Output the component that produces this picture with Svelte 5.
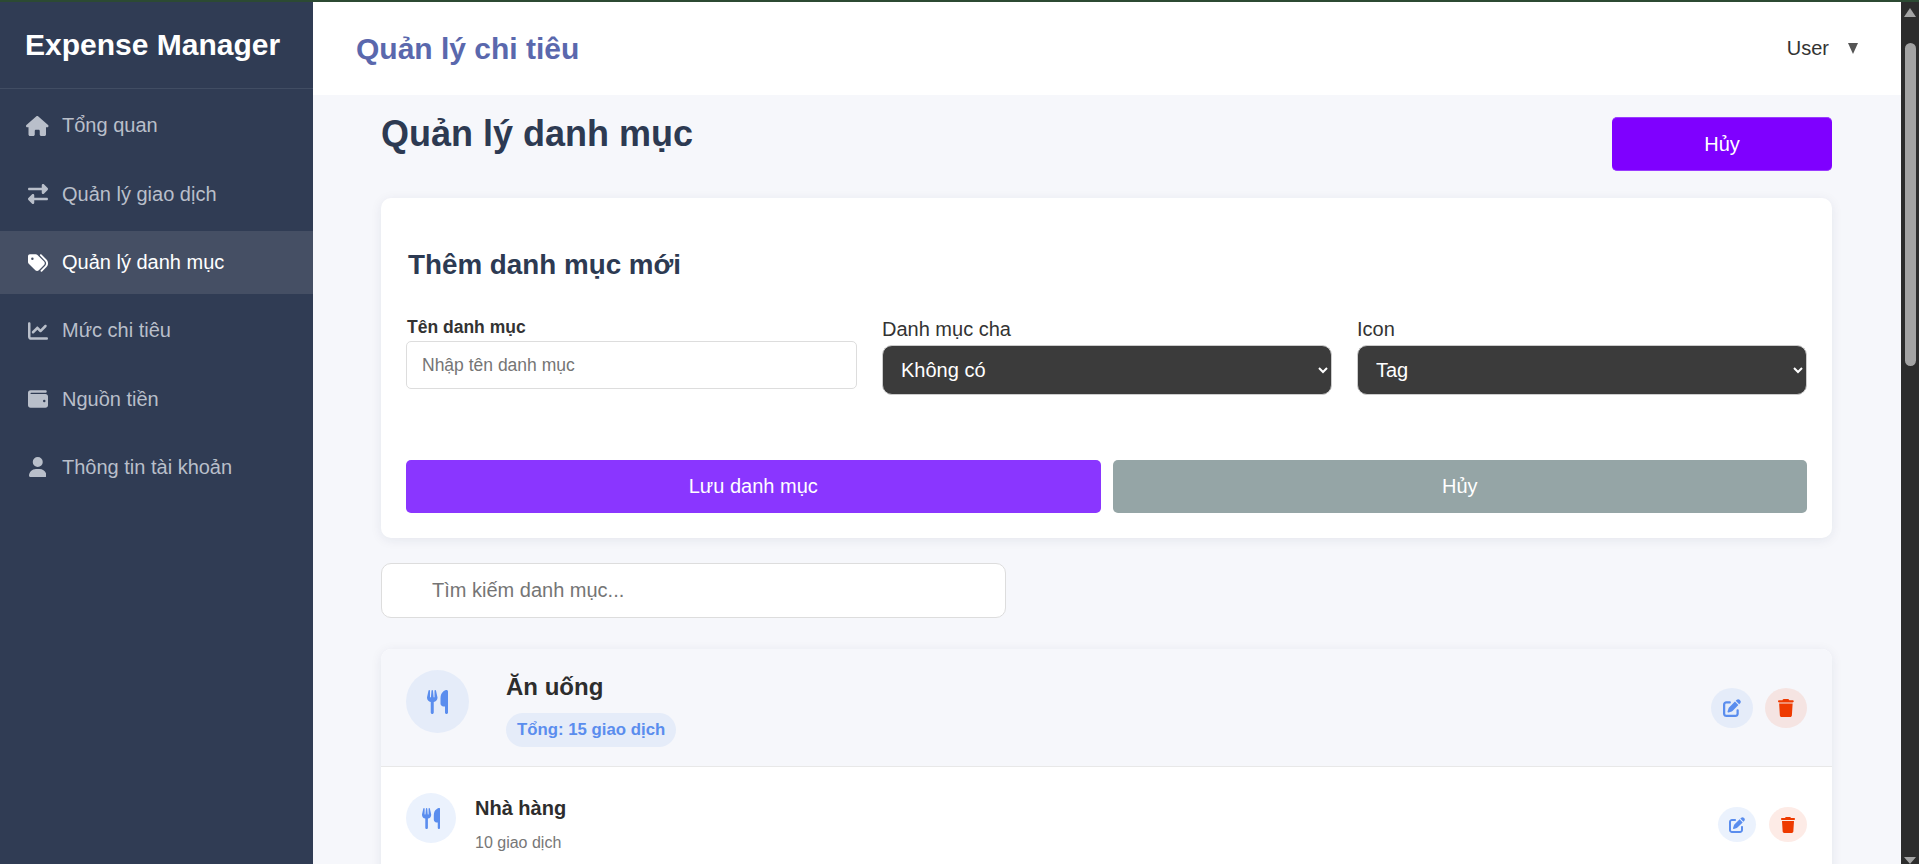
<script>
  const icons = {
    home: { w: 576, d: 'M575.8 255.5c0 18-15 32.1-32 32.1h-32l.7 160.2c0 2.7-.2 5.4-.5 8.1V472c0 22.1-17.9 40-40 40H456c-1.1 0-2.2 0-3.3-.1c-1.4 .1-2.8 .1-4.2 .1H416 392c-22.1 0-40-17.9-40-40V448 384c0-17.7-14.3-32-32-32H256c-17.7 0-32 14.3-32 32v64 24c0 22.1-17.9 40-40 40H160 128.1c-1.5 0-3-.1-4.5-.2c-1.2 .1-2.4 .2-3.6 .2H104c-22.1 0-40-17.9-40-40V360c0-.9 0-1.9 .1-2.8V287.6H32c-18 0-32-14-32-32.1c0-9 3-17 10-24L266.4 8c7-7 15-8 22-8s15 2 21 7L564.8 231.5c8 7 12 15 11 24z' },
    exchange: { w: 512, d: 'M32 96l320 0V32c0-12.9 7.8-24.6 19.8-29.6s25.7-2.2 34.9 6.9l96 96c6 6 9.4 14.1 9.4 22.6s-3.4 16.6-9.4 22.6l-96 96c-9.2 9.2-22.9 11.9-34.9 6.9s-19.8-16.6-19.8-29.6V160L32 160c-17.7 0-32-14.3-32-32s14.3-32 32-32zM480 352c17.7 0 32 14.3 32 32s-14.3 32-32 32H160v64c0 12.9-7.8 24.6-19.8 29.6s-25.7 2.2-34.9-6.9l-96-96c-6-6-9.4-14.1-9.4-22.6s3.4-16.6 9.4-22.6l96-96c9.2-9.2 22.9-11.9 34.9-6.9s19.8 16.6 19.8 29.6l0 64H480z' },
    tags: { w: 512, d: 'M345 39.1L472.8 168.4c52.4 53 52.4 138.2 0 191.2L360.8 472.9c-9.3 9.4-24.5 9.5-33.9 .2s-9.5-24.5-.2-33.9L438.6 325.9c33.9-34.3 33.9-89.4 0-123.7L310.9 72.9c-9.3-9.4-9.2-24.6 .2-33.9s24.6-9.2 33.9 .2zM0 229.5V80C0 53.5 21.5 32 48 32H197.5c17 0 33.3 6.7 45.3 18.7l168 168c25 25 25 65.5 0 90.5L277.3 442.7c-25 25-65.5 25-90.5 0l-168-168C6.7 262.7 0 246.5 0 229.5zM144 144a32 32 0 1 0 -64 0 32 32 0 1 0 64 0z' },
    chart: { w: 512, d: 'M64 64c0-17.7-14.3-32-32-32S0 46.3 0 64V400c0 44.2 35.8 80 80 80H480c17.7 0 32-14.3 32-32s-14.3-32-32-32H80c-8.8 0-16-7.2-16-16V64zm406.6 86.6c12.5-12.5 12.5-32.8 0-45.3s-32.8-12.5-45.3 0L320 210.7l-57.4-57.4c-12.5-12.5-32.8-12.5-45.3 0l-112 112c-12.5 12.5-12.5 32.8 0 45.3s32.8 12.5 45.3 0L240 221.3l57.4 57.4c12.5 12.5 32.8 12.5 45.3 0l128-128z' },
    wallet: { w: 512, d: 'M64 32C28.7 32 0 60.7 0 96V416c0 35.3 28.7 64 64 64H448c35.3 0 64-28.7 64-64V192c0-35.3-28.7-64-64-64H80c-8.8 0-16-7.2-16-16s7.2-16 16-16H448c17.7 0 32-14.3 32-32s-14.3-32-32-32H64zM416 272a32 32 0 1 1 0 64 32 32 0 1 1 0-64z' },
    user: { w: 448, d: 'M224 256A128 128 0 1 0 224 0a128 128 0 1 0 0 256zm-45.7 48C79.8 304 0 383.8 0 482.3C0 498.7 13.3 512 29.7 512H418.3c16.4 0 29.7-13.3 29.7-29.7C448 383.8 368.2 304 269.7 304H178.3z' },
    utensils: { w: 448, d: 'M416 0C400 0 288 32 288 176V288c0 35.3 28.7 64 64 64h32V480c0 17.7 14.3 32 32 32s32-14.3 32-32V352 240 32c0-17.7-14.3-32-32-32zM64 16C64 7.8 57.9 1 49.7 .1S34.2 4.6 32.4 12.5L2.1 148.8C.7 155.1 0 161.5 0 167.9c0 45.9 35.1 83.6 80 87.7V480c0 17.7 14.3 32 32 32s32-14.3 32-32V255.6c44.9-4.1 80-41.8 80-87.7c0-6.4-.7-12.8-2.1-19.1L191.6 12.5c-1.8-8-9.3-13.3-17.4-12.4S160 7.8 160 16V150.2c0 5.4-4.4 9.8-9.8 9.8c-5.1 0-9.3-3.9-9.8-9L127.9 14.6C127.2 6.3 120.3 0 112 0s-15.2 6.3-15.9 14.6L83.7 151c-.5 5.1-4.7 9-9.8 9c-5.4 0-9.8-4.4-9.8-9.8V16zm48.3 152l-.3 0-.3 0 .3-.7 .3 .7z' },
    edit: { w: 512, d: 'M471.6 21.7c-21.9-21.9-57.3-21.9-79.2 0L362.3 51.7l97.9 97.9 30.1-30.1c21.9-21.9 21.9-57.3 0-79.2L471.6 21.7zm-299.2 220c-6.1 6.1-10.8 13.6-13.5 21.9l-29.6 88.8c-2.9 8.6-.6 18.1 5.8 24.6s15.9 8.7 24.6 5.8l88.8-29.6c8.2-2.7 15.7-7.4 21.9-13.5L437.7 172.3 339.7 74.3 172.4 241.7zM96 64C43 64 0 107 0 160V416c0 53 43 96 96 96H352c53 0 96-43 96-96V320c0-17.7-14.3-32-32-32s-32 14.3-32 32v96c0 17.7-14.3 32-32 32H96c-17.7 0-32-14.3-32-32V160c0-17.7 14.3-32 32-32h96c17.7 0 32-14.3 32-32s-14.3-32-32-32H96z' },
    trash: { w: 448, d: 'M135.2 17.7L128 32H32C14.3 32 0 46.3 0 64S14.3 96 32 96H416c17.7 0 32-14.3 32-32s-14.3-32-32-32H320l-7.2-14.3C307.4 6.8 296.3 0 284.2 0H163.8c-12.1 0-23.2 6.8-28.6 17.7zM416 128H32L53.2 467c1.6 25.3 22.6 45 47.9 45H346.9c25.3 0 46.3-19.7 47.9-45L416 128z' }
  };
  const nav = [
    { icon: 'home', label: 'Tổng quan' },
    { icon: 'exchange', label: 'Quản lý giao dịch' },
    { icon: 'tags', label: 'Quản lý danh mục', active: true },
    { icon: 'chart', label: 'Mức chi tiêu' },
    { icon: 'wallet', label: 'Nguồn tiền' },
    { icon: 'user', label: 'Thông tin tài khoản' }
  ];
</script>

{#snippet fa(name, size)}
  <svg class="fa" viewBox="0 0 {icons[name].w} 512" height={size} width={size * icons[name].w / 512} aria-hidden="true"><path d={icons[name].d} fill="currentColor" /></svg>
{/snippet}

<div class="window">
  <div class="strip"></div>
  <div class="shell">
    <aside class="sidebar">
      <div class="brand">Expense Manager</div>
      <nav class="nav">
        {#each nav as item}
          <a class="nav-item" class:active={item.active} href="#top">
            <span class="nav-icon">{@render fa(item.icon, 20)}</span>
            <span>{item.label}</span>
          </a>
        {/each}
      </nav>
    </aside>

    <div class="main">
      <header class="topbar">
        <div class="top-title">Quản lý chi tiêu</div>
        <div class="user"><span>User</span><span class="caret"></span></div>
      </header>

      <div class="content">
        <div class="page-head">
          <h1>Quản lý danh mục</h1>
          <button class="btn-top">Hủy</button>
        </div>

        <section class="card form-card">
          <h2>Thêm danh mục mới</h2>
          <div class="fields">
            <div class="field">
              <label class="strong" for="name">Tên danh mục</label>
              <input id="name" placeholder="Nhập tên danh mục" />
            </div>
            <div class="field">
              <label for="parent">Danh mục cha</label>
              <select id="parent"><option>Không có</option></select>
            </div>
            <div class="field">
              <label for="icon">Icon</label>
              <select id="icon"><option>Tag</option></select>
            </div>
          </div>
          <div class="actions">
            <button class="btn-save">Lưu danh mục</button>
            <button class="btn-cancel">Hủy</button>
          </div>
        </section>

        <input class="search" placeholder="Tìm kiếm danh mục..." />

        <section class="card group">
          <div class="group-head">
            <div class="circle big">{@render fa('utensils', 24)}</div>
            <div class="group-info">
              <div class="group-name">Ăn uống</div>
              <span class="badge">Tổng: 15 giao dịch</span>
            </div>
            <div class="tools big-tools">
              <button class="tool edit">{@render fa('edit', 18)}</button>
              <button class="tool del">{@render fa('trash', 18)}</button>
            </div>
          </div>
          <div class="sub">
            <div class="circle small">{@render fa('utensils', 21)}</div>
            <div class="sub-info">
              <div class="sub-name">Nhà hàng</div>
              <div class="sub-count">10 giao dịch</div>
            </div>
            <div class="tools small-tools">
              <button class="tool edit">{@render fa('edit', 16)}</button>
              <button class="tool del">{@render fa('trash', 16)}</button>
            </div>
          </div>
        </section>
      </div>
    </div>

    <div class="scrollbar">
      <span class="arrow up"></span>
      <span class="thumb"></span>
      <span class="arrow down"></span>
    </div>
  </div>
</div>

<style>
  :global(body) { margin: 0; overflow: hidden; background: #f6f7fb; }
  * { box-sizing: border-box; }
  .window { height: 864px; display: flex; flex-direction: column; overflow: hidden; font-family: "Liberation Sans", Arial, sans-serif; color: #2d2d2d; }
  .strip { height: 2px; background: #2c4a33; flex: none; }
  .shell { flex: 1; min-height: 0; display: flex; }

  .sidebar { width: 313px; flex: none; background: #303c54; color: #fff; }
  .brand { height: 87px; padding: 0 25px; display: flex; align-items: center; font-size: 30px; font-weight: 700; border-bottom: 1px solid #414d63; }
  .nav { display: flex; flex-direction: column; gap: 6px; padding-top: 5.7px; }
  .nav-item { height: 62.33px; flex: none; display: flex; align-items: center; padding: 0 25px; color: #b9bfca; text-decoration: none; font-size: 20px; }
  .nav-item.active { background: #454f64; color: #fff; }
  .nav-icon { width: 25px; margin-right: 12px; display: flex; justify-content: center; }
  .fa { display: block; flex: none; }

  .main { flex: 1; min-width: 0; display: flex; flex-direction: column; background: #f6f7fb; }
  .topbar { height: 93px; flex: none; background: #fff; display: flex; align-items: center; justify-content: space-between; padding: 0 43px; }
  .top-title { font-size: 30px; font-weight: 700; color: #5a68ad; }
  .user { display: flex; align-items: center; gap: 19px; font-size: 20px; color: #333; }
  .caret { width: 0; height: 0; border-left: 5.5px solid transparent; border-right: 5.5px solid transparent; border-top: 11px solid #555; }

  .content { width: 1451px; margin: 0 auto 0 68px; }
  .page-head { display: flex; justify-content: space-between; align-items: flex-start; padding-top: 22px; }
  h1 { margin: -4px 0 0; font-size: 36px; font-weight: 700; color: #2d3a52; }
  .btn-top { width: 220px; height: 54px; background: #7f00ff; color: #fff; border: 1px solid #9a3cff; border-width: 1px 0; border-radius: 5px; font: inherit; font-size: 20px; }

  .card { background: #fff; border-radius: 10px; box-shadow: 0 2px 12px rgba(30, 40, 80, 0.08); }
  .form-card { margin-top: 27px; height: 340px; padding: 0 25px; }
  h2 { margin: 0; padding: 50px 0 0 2px; font-size: 27.8px; line-height: 33px; font-weight: 700; color: #2d3a52; }
  .fields { display: grid; grid-template-columns: 451px 450px 1fr; column-gap: 25px; margin-top: 34px; align-items: start; }
  .field { display: flex; flex-direction: column; }
  label { font-size: 20px; line-height: 24px; padding-top: 2px; margin-bottom: 4px; color: #333; }
  label.strong { font-size: 17.5px; font-weight: 700; line-height: 20px; padding: 2px 0 0 1px; margin-bottom: 4px; }
  input { font: inherit; }
  #name { height: 48px; border: 1px solid #ddd; border-radius: 5px; padding: 0 15px; font-size: 17.5px; background: #fff; }
  input::placeholder { color: #757575; opacity: 1; }
  select { height: 50px; border: 1px solid #ccc; border-radius: 10px; background-color: #3b3b3b; color: #fff; font: inherit; font-size: 20px; padding: 0 14px; }
  .actions { display: grid; grid-template-columns: 1fr 1fr; gap: 12px; margin-top: 65px; }
  .actions button { height: 53px; border: 0; border-radius: 5px; color: #fff; font: inherit; font-size: 20px; }
  .btn-save { background: #8a36ff; }
  .btn-cancel { background: #95a5a6; }

  .search { display: block; width: 625px; height: 55px; margin-top: 25px; border: 1px solid #ddd; border-radius: 10px; padding: 0 50px; font-size: 20px; background: #fff; }

  .group { margin-top: 31px; overflow: hidden; }
  .group-head { height: 118px; display: flex; align-items: center; padding: 0 25px; background: #f6f7fb; border-bottom: 1px solid #e8e8e8; }
  .circle { border-radius: 50%; display: flex; align-items: center; justify-content: center; color: #5a8dee; flex: none; align-self: flex-start; }
  .big { width: 63px; height: 63px; margin-top: 21px; background: #e5ecf9; }
  .small { width: 50px; height: 50px; background: #ebf2fd; }
  .group-info { margin: 24px 0 0 37px; flex: 1; align-self: flex-start; }
  .group-name { font-size: 24px; font-weight: 700; line-height: 28px; }
  .badge { display: inline-block; margin-top: 12px; height: 34px; line-height: 34px; padding: 0 11px; border-radius: 17px; background: #e5ecf9; color: #5a8dee; font-size: 16.8px; font-weight: 700; }
  .tools { display: flex; }
  .tool { border: 0; padding: 0; display: flex; align-items: center; justify-content: center; border-radius: 50%; }
  .edit { color: #5a8dee; }
  .del { color: #ee3a00; }
  .big-tools { gap: 12px; }
  .big-tools .tool { width: 42px; height: 40px; }
  .big-tools .edit { background: #e5ecf9; }
  .big-tools .del { background: #f5e4e2; }
  .sub { display: flex; align-items: flex-start; padding: 26px 25px 60px; }
  .sub-info { margin: 3px 0 0 19px; flex: 1; }
  .sub-name { font-size: 20px; font-weight: 700; line-height: 24px; }
  .sub-count { font-size: 16px; line-height: 20px; color: #777; margin-top: 13px; }
  .small-tools { gap: 13px; margin-top: 14px; }
  .small-tools .tool { width: 38px; height: 35px; }
  .small-tools .edit { background: #ebf2fd; }
  .small-tools .del { background: #fdebe6; }

  .scrollbar { width: 18px; flex: none; background: #2c2c2c; position: relative; }
  .thumb { position: absolute; left: 4px; right: 3px; top: 41px; height: 323px; background: #a3a3a3; border-radius: 6px; }
  .arrow { position: absolute; left: 3px; width: 0; height: 0; border-left: 6.5px solid transparent; border-right: 6.5px solid transparent; }
  .arrow.up { top: 6px; border-bottom: 9px solid #a3a3a3; }
  .arrow.down { bottom: 0; border-top: 7px solid #a3a3a3; }
</style>
